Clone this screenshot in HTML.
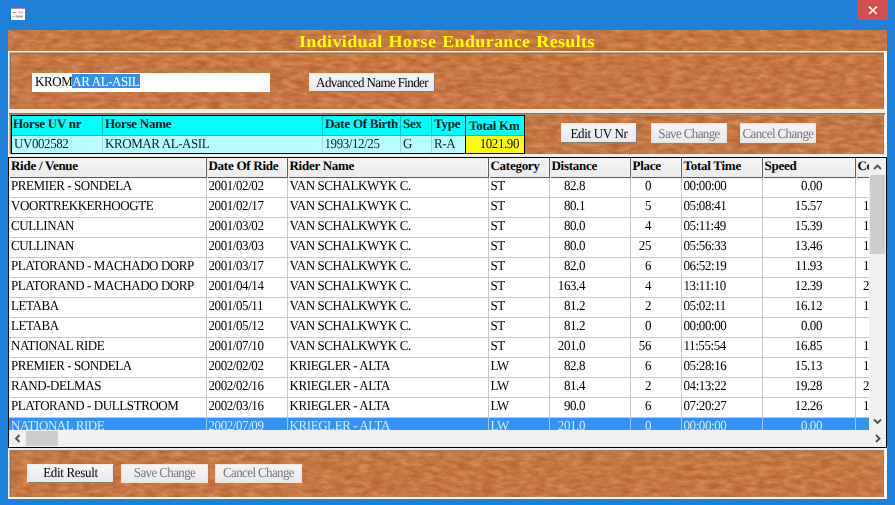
<!DOCTYPE html>
<html><head><meta charset="utf-8">
<style>
html,body{margin:0;padding:0;}
body{width:895px;height:505px;overflow:hidden;position:relative;background:#1d7fd8;font-family:"Liberation Serif", serif;font-size:13px;}
body>div{position:absolute;}
.t{white-space:pre;letter-spacing:-0.42px;transform:scaleY(1.06);transform-origin:0 12px;text-rendering:geometricPrecision;}
</style></head><body>
<svg style="position:absolute;left:10px;top:7px" width="16" height="14" viewBox="0 0 16 14">
<rect x="1" y="1" width="14" height="12" fill="#ffffff"/>
<rect x="1" y="1" width="14" height="1" fill="#c078c8"/>
<rect x="2.5" y="5" width="4" height="1" fill="#a0a0a0"/>
<rect x="8" y="4.5" width="5" height="2" fill="#c8c8c8"/>
<rect x="2.5" y="9" width="2" height="1" fill="#c0b8b8"/>
<rect x="5.5" y="8.5" width="7.5" height="2" fill="#b8a8a8"/>
</svg>
<div style="left:857px;top:0px;width:31px;height:20px;background:#d24f4f;"></div>
<svg style="position:absolute;left:857px;top:0px" width="30" height="19" viewBox="0 0 30 19">
<path d="M12 6.6 L19.8 14 M19.8 6.6 L12 14" stroke="#ffffff" stroke-width="1.6" fill="none"/>
</svg>
<svg style="position:absolute;left:8px;top:30px" width="879" height="469">
<defs>
<filter id="wood" x="0" y="0" width="100%" height="100%" color-interpolation-filters="sRGB">
<feTurbulence type="fractalNoise" baseFrequency="0.08 0.22" numOctaves="3" seed="3" result="n"/>
<feColorMatrix type="matrix" in="n" values="0.22 0 0 0 0.666  0.24 0 0 0 0.35  0.22 0 0 0 0.156  0 0 0 0 1"/>
</filter>
</defs>
<rect x="0" y="0" width="879" height="469" fill="#c97a45" filter="url(#wood)"/>
</svg>
<div class="t" style="left:299px;top:31.2px;line-height:21px;font-weight:bold;font-size:18px;color:#ffff00;letter-spacing:0.36px;word-spacing:1px;transform:scaleY(0.94);transform-origin:0 16px;">Individual Horse Endurance Results</div>
<div style="left:8px;top:51px;width:879px;height:1px;background:#f4efe6;"></div>
<div style="left:9px;top:52px;width:876px;height:1px;background:#c8b8a8;"></div>
<div style="left:10px;top:53px;width:875px;height:1px;background:#857565;"></div>
<div style="left:8px;top:51px;width:1px;height:448px;background:#f4efe6;"></div>
<div style="left:9px;top:52px;width:1px;height:446px;background:#c8b8a8;"></div>
<div style="left:10px;top:53px;width:1px;height:444px;background:#857565;"></div>
<div style="left:884px;top:51px;width:3px;height:448px;background:#f8f4ee;"></div>
<div style="left:8px;top:497px;width:879px;height:2px;background:#f8f4ee;"></div>
<div style="left:32px;top:73px;width:238px;height:19px;background:#ffffff;"></div>
<div style="left:72px;top:74px;width:68px;height:14px;background:#3390ee;"></div>
<div class="t" style="left:35px;top:74px;line-height:15px;color:#000;">KROM<span style="color:#ffffff">AR AL-ASIL</span></div>
<div style="left:309px;top:73px;width:126px;height:19px;background:linear-gradient(#f3f4f6,#e7e9ec);border:1px solid;border-color:#f2e8de #8a7868 #8a7868 #f2e8de;box-sizing:border-box;"></div>
<div class="t" style="left:309px;top:74.9px;line-height:15px;color:#000000;letter-spacing:-0.62px;width:126px;text-align:center;">Advanced Name Finder</div>
<div style="left:9px;top:109px;width:876px;height:4px;background:#f2ede6;"></div>
<div style="left:9px;top:113px;width:876px;height:1px;background:#857565;"></div>
<div style="left:9px;top:114px;width:876px;height:1px;background:#a88a74;"></div>
<div style="left:11px;top:115px;width:514px;height:39px;background:#000000;"></div>
<div style="left:12px;top:116px;width:512px;height:19px;background:#00ffff;"></div>
<div style="left:12px;top:135px;width:512px;height:1px;background:#00c8c8;"></div>
<div style="left:12px;top:136px;width:453px;height:17px;background:#b6ffff;"></div>
<div style="left:466px;top:136px;width:58px;height:17px;background:#ffff00;"></div>
<div style="left:465px;top:116px;width:1px;height:37px;background:#000000;"></div>
<div style="left:102px;top:116px;width:1px;height:19px;background:#00c0c0;"></div>
<div style="left:102px;top:136px;width:1px;height:17px;background:#90dede;"></div>
<div style="left:322px;top:116px;width:1px;height:19px;background:#00c0c0;"></div>
<div style="left:322px;top:136px;width:1px;height:17px;background:#90dede;"></div>
<div style="left:400px;top:116px;width:1px;height:19px;background:#00c0c0;"></div>
<div style="left:400px;top:136px;width:1px;height:17px;background:#90dede;"></div>
<div style="left:431px;top:116px;width:1px;height:19px;background:#00c0c0;"></div>
<div style="left:431px;top:136px;width:1px;height:17px;background:#90dede;"></div>
<div class="t" style="left:13px;top:116px;line-height:15px;font-weight:bold;color:#002020;transform:none;letter-spacing:-0.27px;">Horse UV nr</div>
<div class="t" style="left:105px;top:116px;line-height:15px;font-weight:bold;color:#002020;transform:none;letter-spacing:-0.27px;">Horse Name</div>
<div class="t" style="left:325px;top:116px;line-height:15px;font-weight:bold;color:#002020;transform:none;letter-spacing:-0.27px;">Date Of Birth</div>
<div class="t" style="left:403px;top:116px;line-height:15px;font-weight:bold;color:#002020;transform:none;letter-spacing:-0.27px;">Sex</div>
<div class="t" style="left:434px;top:116px;line-height:15px;font-weight:bold;color:#002020;transform:none;letter-spacing:-0.27px;">Type</div>
<div class="t" style="left:469px;top:118px;line-height:15px;font-weight:bold;color:#002020;transform:none;letter-spacing:-0.27px;">Total Km</div>
<div class="t" style="left:14px;top:136px;line-height:15px;color:#102020;">UV002582</div>
<div class="t" style="left:105px;top:136px;line-height:15px;color:#102020;">KROMAR AL-ASIL</div>
<div class="t" style="left:324.5px;top:136px;line-height:15px;color:#102020;">1993/12/25</div>
<div class="t" style="left:403px;top:136px;line-height:15px;color:#102020;">G</div>
<div class="t" style="left:434px;top:136px;line-height:15px;color:#102020;">R-A</div>
<div class="t" style="left:466px;top:136px;line-height:15px;color:#101000;width:53px;text-align:right;">1021.90</div>
<div style="left:561px;top:123px;width:76px;height:20px;background:linear-gradient(#f3f4f6,#e7e9ec);border:1px solid;border-color:#f2e8de #8a7868 #8a7868 #f2e8de;box-sizing:border-box;"></div>
<div class="t" style="left:561px;top:125.7px;line-height:15px;color:#000000;letter-spacing:-0.33px;width:76px;text-align:center;">Edit UV Nr</div>
<div style="left:651px;top:123px;width:76px;height:20px;background:linear-gradient(#f3f4f6,#e7e9ec);border:1px solid;border-color:#efe3d6;box-sizing:border-box;"></div>
<div class="t" style="left:651px;top:125.7px;line-height:15px;color:#767676;letter-spacing:-0.62px;width:76px;text-align:center;">Save Change</div>
<div style="left:740px;top:123px;width:76px;height:20px;background:linear-gradient(#f3f4f6,#e7e9ec);border:1px solid;border-color:#efe3d6;box-sizing:border-box;"></div>
<div class="t" style="left:740px;top:125.7px;line-height:15px;color:#767676;letter-spacing:-0.62px;width:76px;text-align:center;">Cancel Change</div>
<div style="left:9px;top:154px;width:876px;height:3px;background:#f2f0ee;"></div>
<div style="left:8px;top:157px;width:879px;height:291px;background:#000000;"></div>
<div style="left:9px;top:158px;width:877px;height:289px;background:#ffffff;"></div>
<div style="left:9px;top:158px;width:860px;height:19px;background:linear-gradient(#f4f4f4,#ececec);"></div>
<div style="left:10px;top:177px;width:197px;height:1px;background:#5a5a5a;"></div>
<div style="left:206px;top:158px;width:1px;height:20px;background:#5e5e5e;"></div>
<div style="left:205px;top:158px;width:1px;height:19px;background:#fafafa;"></div>
<div style="left:208px;top:177px;width:80px;height:1px;background:#5a5a5a;"></div>
<div style="left:287px;top:158px;width:1px;height:20px;background:#5e5e5e;"></div>
<div style="left:286px;top:158px;width:1px;height:19px;background:#fafafa;"></div>
<div style="left:289px;top:177px;width:200px;height:1px;background:#5a5a5a;"></div>
<div style="left:488px;top:158px;width:1px;height:20px;background:#5e5e5e;"></div>
<div style="left:487px;top:158px;width:1px;height:19px;background:#fafafa;"></div>
<div style="left:490px;top:177px;width:60px;height:1px;background:#5a5a5a;"></div>
<div style="left:549px;top:158px;width:1px;height:20px;background:#5e5e5e;"></div>
<div style="left:548px;top:158px;width:1px;height:19px;background:#fafafa;"></div>
<div style="left:551px;top:177px;width:80px;height:1px;background:#5a5a5a;"></div>
<div style="left:630px;top:158px;width:1px;height:20px;background:#5e5e5e;"></div>
<div style="left:629px;top:158px;width:1px;height:19px;background:#fafafa;"></div>
<div style="left:632px;top:177px;width:50px;height:1px;background:#5a5a5a;"></div>
<div style="left:681px;top:158px;width:1px;height:20px;background:#5e5e5e;"></div>
<div style="left:680px;top:158px;width:1px;height:19px;background:#fafafa;"></div>
<div style="left:683px;top:177px;width:80px;height:1px;background:#5a5a5a;"></div>
<div style="left:762px;top:158px;width:1px;height:20px;background:#5e5e5e;"></div>
<div style="left:761px;top:158px;width:1px;height:19px;background:#fafafa;"></div>
<div style="left:764px;top:177px;width:92px;height:1px;background:#5a5a5a;"></div>
<div style="left:855px;top:158px;width:1px;height:20px;background:#5e5e5e;"></div>
<div style="left:854px;top:158px;width:1px;height:19px;background:#fafafa;"></div>
<div style="left:857px;top:177px;width:12px;height:1px;background:#5a5a5a;"></div>
<div class="t" style="left:11px;top:158px;line-height:15px;font-weight:bold;color:#000;transform:none;letter-spacing:-0.27px;">Ride / Venue</div>
<div class="t" style="left:208.5px;top:158px;line-height:15px;font-weight:bold;color:#000;transform:none;letter-spacing:-0.27px;">Date Of Ride</div>
<div class="t" style="left:289.5px;top:158px;line-height:15px;font-weight:bold;color:#000;transform:none;letter-spacing:-0.27px;">Rider Name</div>
<div class="t" style="left:490.5px;top:158px;line-height:15px;font-weight:bold;color:#000;transform:none;letter-spacing:-0.27px;">Category</div>
<div class="t" style="left:551.5px;top:158px;line-height:15px;font-weight:bold;color:#000;transform:none;letter-spacing:-0.27px;">Distance</div>
<div class="t" style="left:632.5px;top:158px;line-height:15px;font-weight:bold;color:#000;transform:none;letter-spacing:-0.27px;">Place</div>
<div class="t" style="left:683.5px;top:158px;line-height:15px;font-weight:bold;color:#000;transform:none;letter-spacing:-0.27px;">Total Time</div>
<div class="t" style="left:764.5px;top:158px;line-height:15px;font-weight:bold;color:#000;transform:none;letter-spacing:-0.27px;">Speed</div>
<div class="t" style="left:857.5px;top:158px;line-height:15px;font-weight:bold;color:#000;transform:none;letter-spacing:-0.27px;">Cc</div>
<div style="left:9px;top:197px;width:860px;height:1px;background:#c8c8c8;"></div>
<div style="left:206px;top:178px;width:1px;height:19px;background:#c8c8c8;"></div>
<div style="left:287px;top:178px;width:1px;height:19px;background:#c8c8c8;"></div>
<div style="left:488px;top:178px;width:1px;height:19px;background:#c8c8c8;"></div>
<div style="left:549px;top:178px;width:1px;height:19px;background:#c8c8c8;"></div>
<div style="left:630px;top:178px;width:1px;height:19px;background:#c8c8c8;"></div>
<div style="left:681px;top:178px;width:1px;height:19px;background:#c8c8c8;"></div>
<div style="left:762px;top:178px;width:1px;height:19px;background:#c8c8c8;"></div>
<div style="left:855px;top:178px;width:1px;height:19px;background:#c8c8c8;"></div>
<div class="t" style="left:11px;top:178px;line-height:15px;color:#000000;">PREMIER - SONDELA</div>
<div class="t" style="left:208.5px;top:178px;line-height:15px;color:#000000;">2001/02/02</div>
<div class="t" style="left:289.5px;top:178px;line-height:15px;color:#000000;">VAN SCHALKWYK C.</div>
<div class="t" style="left:490.5px;top:178px;line-height:15px;color:#000000;">ST</div>
<div class="t" style="left:549px;top:178px;line-height:15px;color:#000000;width:36px;text-align:right;">82.8</div>
<div class="t" style="left:630px;top:178px;line-height:15px;color:#000000;width:21px;text-align:right;">0</div>
<div class="t" style="left:683.5px;top:178px;line-height:15px;color:#000000;">00:00:00</div>
<div class="t" style="left:762px;top:178px;line-height:15px;color:#000000;width:60px;text-align:right;">0.00</div>
<div class="t" style="left:855px;top:178px;line-height:15px;color:#000000;width:14px;text-align:right;"></div>
<div style="left:9px;top:217px;width:860px;height:1px;background:#c8c8c8;"></div>
<div style="left:206px;top:198px;width:1px;height:19px;background:#c8c8c8;"></div>
<div style="left:287px;top:198px;width:1px;height:19px;background:#c8c8c8;"></div>
<div style="left:488px;top:198px;width:1px;height:19px;background:#c8c8c8;"></div>
<div style="left:549px;top:198px;width:1px;height:19px;background:#c8c8c8;"></div>
<div style="left:630px;top:198px;width:1px;height:19px;background:#c8c8c8;"></div>
<div style="left:681px;top:198px;width:1px;height:19px;background:#c8c8c8;"></div>
<div style="left:762px;top:198px;width:1px;height:19px;background:#c8c8c8;"></div>
<div style="left:855px;top:198px;width:1px;height:19px;background:#c8c8c8;"></div>
<div class="t" style="left:11px;top:198px;line-height:15px;color:#000000;">VOORTREKKERHOOGTE</div>
<div class="t" style="left:208.5px;top:198px;line-height:15px;color:#000000;">2001/02/17</div>
<div class="t" style="left:289.5px;top:198px;line-height:15px;color:#000000;">VAN SCHALKWYK C.</div>
<div class="t" style="left:490.5px;top:198px;line-height:15px;color:#000000;">ST</div>
<div class="t" style="left:549px;top:198px;line-height:15px;color:#000000;width:36px;text-align:right;">80.1</div>
<div class="t" style="left:630px;top:198px;line-height:15px;color:#000000;width:21px;text-align:right;">5</div>
<div class="t" style="left:683.5px;top:198px;line-height:15px;color:#000000;">05:08:41</div>
<div class="t" style="left:762px;top:198px;line-height:15px;color:#000000;width:60px;text-align:right;">15.57</div>
<div class="t" style="left:855px;top:198px;line-height:15px;color:#000000;width:14px;text-align:right;">1</div>
<div style="left:9px;top:237px;width:860px;height:1px;background:#c8c8c8;"></div>
<div style="left:206px;top:218px;width:1px;height:19px;background:#c8c8c8;"></div>
<div style="left:287px;top:218px;width:1px;height:19px;background:#c8c8c8;"></div>
<div style="left:488px;top:218px;width:1px;height:19px;background:#c8c8c8;"></div>
<div style="left:549px;top:218px;width:1px;height:19px;background:#c8c8c8;"></div>
<div style="left:630px;top:218px;width:1px;height:19px;background:#c8c8c8;"></div>
<div style="left:681px;top:218px;width:1px;height:19px;background:#c8c8c8;"></div>
<div style="left:762px;top:218px;width:1px;height:19px;background:#c8c8c8;"></div>
<div style="left:855px;top:218px;width:1px;height:19px;background:#c8c8c8;"></div>
<div class="t" style="left:11px;top:218px;line-height:15px;color:#000000;">CULLINAN</div>
<div class="t" style="left:208.5px;top:218px;line-height:15px;color:#000000;">2001/03/02</div>
<div class="t" style="left:289.5px;top:218px;line-height:15px;color:#000000;">VAN SCHALKWYK C.</div>
<div class="t" style="left:490.5px;top:218px;line-height:15px;color:#000000;">ST</div>
<div class="t" style="left:549px;top:218px;line-height:15px;color:#000000;width:36px;text-align:right;">80.0</div>
<div class="t" style="left:630px;top:218px;line-height:15px;color:#000000;width:21px;text-align:right;">4</div>
<div class="t" style="left:683.5px;top:218px;line-height:15px;color:#000000;">05:11:49</div>
<div class="t" style="left:762px;top:218px;line-height:15px;color:#000000;width:60px;text-align:right;">15.39</div>
<div class="t" style="left:855px;top:218px;line-height:15px;color:#000000;width:14px;text-align:right;">1</div>
<div style="left:9px;top:257px;width:860px;height:1px;background:#c8c8c8;"></div>
<div style="left:206px;top:238px;width:1px;height:19px;background:#c8c8c8;"></div>
<div style="left:287px;top:238px;width:1px;height:19px;background:#c8c8c8;"></div>
<div style="left:488px;top:238px;width:1px;height:19px;background:#c8c8c8;"></div>
<div style="left:549px;top:238px;width:1px;height:19px;background:#c8c8c8;"></div>
<div style="left:630px;top:238px;width:1px;height:19px;background:#c8c8c8;"></div>
<div style="left:681px;top:238px;width:1px;height:19px;background:#c8c8c8;"></div>
<div style="left:762px;top:238px;width:1px;height:19px;background:#c8c8c8;"></div>
<div style="left:855px;top:238px;width:1px;height:19px;background:#c8c8c8;"></div>
<div class="t" style="left:11px;top:238px;line-height:15px;color:#000000;">CULLINAN</div>
<div class="t" style="left:208.5px;top:238px;line-height:15px;color:#000000;">2001/03/03</div>
<div class="t" style="left:289.5px;top:238px;line-height:15px;color:#000000;">VAN SCHALKWYK C.</div>
<div class="t" style="left:490.5px;top:238px;line-height:15px;color:#000000;">ST</div>
<div class="t" style="left:549px;top:238px;line-height:15px;color:#000000;width:36px;text-align:right;">80.0</div>
<div class="t" style="left:630px;top:238px;line-height:15px;color:#000000;width:21px;text-align:right;">25</div>
<div class="t" style="left:683.5px;top:238px;line-height:15px;color:#000000;">05:56:33</div>
<div class="t" style="left:762px;top:238px;line-height:15px;color:#000000;width:60px;text-align:right;">13.46</div>
<div class="t" style="left:855px;top:238px;line-height:15px;color:#000000;width:14px;text-align:right;">1</div>
<div style="left:9px;top:277px;width:860px;height:1px;background:#c8c8c8;"></div>
<div style="left:206px;top:258px;width:1px;height:19px;background:#c8c8c8;"></div>
<div style="left:287px;top:258px;width:1px;height:19px;background:#c8c8c8;"></div>
<div style="left:488px;top:258px;width:1px;height:19px;background:#c8c8c8;"></div>
<div style="left:549px;top:258px;width:1px;height:19px;background:#c8c8c8;"></div>
<div style="left:630px;top:258px;width:1px;height:19px;background:#c8c8c8;"></div>
<div style="left:681px;top:258px;width:1px;height:19px;background:#c8c8c8;"></div>
<div style="left:762px;top:258px;width:1px;height:19px;background:#c8c8c8;"></div>
<div style="left:855px;top:258px;width:1px;height:19px;background:#c8c8c8;"></div>
<div class="t" style="left:11px;top:258px;line-height:15px;color:#000000;">PLATORAND - MACHADO DORP</div>
<div class="t" style="left:208.5px;top:258px;line-height:15px;color:#000000;">2001/03/17</div>
<div class="t" style="left:289.5px;top:258px;line-height:15px;color:#000000;">VAN SCHALKWYK C.</div>
<div class="t" style="left:490.5px;top:258px;line-height:15px;color:#000000;">ST</div>
<div class="t" style="left:549px;top:258px;line-height:15px;color:#000000;width:36px;text-align:right;">82.0</div>
<div class="t" style="left:630px;top:258px;line-height:15px;color:#000000;width:21px;text-align:right;">6</div>
<div class="t" style="left:683.5px;top:258px;line-height:15px;color:#000000;">06:52:19</div>
<div class="t" style="left:762px;top:258px;line-height:15px;color:#000000;width:60px;text-align:right;">11.93</div>
<div class="t" style="left:855px;top:258px;line-height:15px;color:#000000;width:14px;text-align:right;">1</div>
<div style="left:9px;top:297px;width:860px;height:1px;background:#c8c8c8;"></div>
<div style="left:206px;top:278px;width:1px;height:19px;background:#c8c8c8;"></div>
<div style="left:287px;top:278px;width:1px;height:19px;background:#c8c8c8;"></div>
<div style="left:488px;top:278px;width:1px;height:19px;background:#c8c8c8;"></div>
<div style="left:549px;top:278px;width:1px;height:19px;background:#c8c8c8;"></div>
<div style="left:630px;top:278px;width:1px;height:19px;background:#c8c8c8;"></div>
<div style="left:681px;top:278px;width:1px;height:19px;background:#c8c8c8;"></div>
<div style="left:762px;top:278px;width:1px;height:19px;background:#c8c8c8;"></div>
<div style="left:855px;top:278px;width:1px;height:19px;background:#c8c8c8;"></div>
<div class="t" style="left:11px;top:278px;line-height:15px;color:#000000;">PLATORAND - MACHADO DORP</div>
<div class="t" style="left:208.5px;top:278px;line-height:15px;color:#000000;">2001/04/14</div>
<div class="t" style="left:289.5px;top:278px;line-height:15px;color:#000000;">VAN SCHALKWYK C.</div>
<div class="t" style="left:490.5px;top:278px;line-height:15px;color:#000000;">ST</div>
<div class="t" style="left:549px;top:278px;line-height:15px;color:#000000;width:36px;text-align:right;">163.4</div>
<div class="t" style="left:630px;top:278px;line-height:15px;color:#000000;width:21px;text-align:right;">4</div>
<div class="t" style="left:683.5px;top:278px;line-height:15px;color:#000000;">13:11:10</div>
<div class="t" style="left:762px;top:278px;line-height:15px;color:#000000;width:60px;text-align:right;">12.39</div>
<div class="t" style="left:855px;top:278px;line-height:15px;color:#000000;width:14px;text-align:right;">2</div>
<div style="left:9px;top:317px;width:860px;height:1px;background:#c8c8c8;"></div>
<div style="left:206px;top:298px;width:1px;height:19px;background:#c8c8c8;"></div>
<div style="left:287px;top:298px;width:1px;height:19px;background:#c8c8c8;"></div>
<div style="left:488px;top:298px;width:1px;height:19px;background:#c8c8c8;"></div>
<div style="left:549px;top:298px;width:1px;height:19px;background:#c8c8c8;"></div>
<div style="left:630px;top:298px;width:1px;height:19px;background:#c8c8c8;"></div>
<div style="left:681px;top:298px;width:1px;height:19px;background:#c8c8c8;"></div>
<div style="left:762px;top:298px;width:1px;height:19px;background:#c8c8c8;"></div>
<div style="left:855px;top:298px;width:1px;height:19px;background:#c8c8c8;"></div>
<div class="t" style="left:11px;top:298px;line-height:15px;color:#000000;">LETABA</div>
<div class="t" style="left:208.5px;top:298px;line-height:15px;color:#000000;">2001/05/11</div>
<div class="t" style="left:289.5px;top:298px;line-height:15px;color:#000000;">VAN SCHALKWYK C.</div>
<div class="t" style="left:490.5px;top:298px;line-height:15px;color:#000000;">ST</div>
<div class="t" style="left:549px;top:298px;line-height:15px;color:#000000;width:36px;text-align:right;">81.2</div>
<div class="t" style="left:630px;top:298px;line-height:15px;color:#000000;width:21px;text-align:right;">2</div>
<div class="t" style="left:683.5px;top:298px;line-height:15px;color:#000000;">05:02:11</div>
<div class="t" style="left:762px;top:298px;line-height:15px;color:#000000;width:60px;text-align:right;">16.12</div>
<div class="t" style="left:855px;top:298px;line-height:15px;color:#000000;width:14px;text-align:right;">1</div>
<div style="left:9px;top:337px;width:860px;height:1px;background:#c8c8c8;"></div>
<div style="left:206px;top:318px;width:1px;height:19px;background:#c8c8c8;"></div>
<div style="left:287px;top:318px;width:1px;height:19px;background:#c8c8c8;"></div>
<div style="left:488px;top:318px;width:1px;height:19px;background:#c8c8c8;"></div>
<div style="left:549px;top:318px;width:1px;height:19px;background:#c8c8c8;"></div>
<div style="left:630px;top:318px;width:1px;height:19px;background:#c8c8c8;"></div>
<div style="left:681px;top:318px;width:1px;height:19px;background:#c8c8c8;"></div>
<div style="left:762px;top:318px;width:1px;height:19px;background:#c8c8c8;"></div>
<div style="left:855px;top:318px;width:1px;height:19px;background:#c8c8c8;"></div>
<div class="t" style="left:11px;top:318px;line-height:15px;color:#000000;">LETABA</div>
<div class="t" style="left:208.5px;top:318px;line-height:15px;color:#000000;">2001/05/12</div>
<div class="t" style="left:289.5px;top:318px;line-height:15px;color:#000000;">VAN SCHALKWYK C.</div>
<div class="t" style="left:490.5px;top:318px;line-height:15px;color:#000000;">ST</div>
<div class="t" style="left:549px;top:318px;line-height:15px;color:#000000;width:36px;text-align:right;">81.2</div>
<div class="t" style="left:630px;top:318px;line-height:15px;color:#000000;width:21px;text-align:right;">0</div>
<div class="t" style="left:683.5px;top:318px;line-height:15px;color:#000000;">00:00:00</div>
<div class="t" style="left:762px;top:318px;line-height:15px;color:#000000;width:60px;text-align:right;">0.00</div>
<div class="t" style="left:855px;top:318px;line-height:15px;color:#000000;width:14px;text-align:right;"></div>
<div style="left:9px;top:357px;width:860px;height:1px;background:#c8c8c8;"></div>
<div style="left:206px;top:338px;width:1px;height:19px;background:#c8c8c8;"></div>
<div style="left:287px;top:338px;width:1px;height:19px;background:#c8c8c8;"></div>
<div style="left:488px;top:338px;width:1px;height:19px;background:#c8c8c8;"></div>
<div style="left:549px;top:338px;width:1px;height:19px;background:#c8c8c8;"></div>
<div style="left:630px;top:338px;width:1px;height:19px;background:#c8c8c8;"></div>
<div style="left:681px;top:338px;width:1px;height:19px;background:#c8c8c8;"></div>
<div style="left:762px;top:338px;width:1px;height:19px;background:#c8c8c8;"></div>
<div style="left:855px;top:338px;width:1px;height:19px;background:#c8c8c8;"></div>
<div class="t" style="left:11px;top:338px;line-height:15px;color:#000000;">NATIONAL RIDE</div>
<div class="t" style="left:208.5px;top:338px;line-height:15px;color:#000000;">2001/07/10</div>
<div class="t" style="left:289.5px;top:338px;line-height:15px;color:#000000;">VAN SCHALKWYK C.</div>
<div class="t" style="left:490.5px;top:338px;line-height:15px;color:#000000;">ST</div>
<div class="t" style="left:549px;top:338px;line-height:15px;color:#000000;width:36px;text-align:right;">201.0</div>
<div class="t" style="left:630px;top:338px;line-height:15px;color:#000000;width:21px;text-align:right;">56</div>
<div class="t" style="left:683.5px;top:338px;line-height:15px;color:#000000;">11:55:54</div>
<div class="t" style="left:762px;top:338px;line-height:15px;color:#000000;width:60px;text-align:right;">16.85</div>
<div class="t" style="left:855px;top:338px;line-height:15px;color:#000000;width:14px;text-align:right;">1</div>
<div style="left:9px;top:377px;width:860px;height:1px;background:#c8c8c8;"></div>
<div style="left:206px;top:358px;width:1px;height:19px;background:#c8c8c8;"></div>
<div style="left:287px;top:358px;width:1px;height:19px;background:#c8c8c8;"></div>
<div style="left:488px;top:358px;width:1px;height:19px;background:#c8c8c8;"></div>
<div style="left:549px;top:358px;width:1px;height:19px;background:#c8c8c8;"></div>
<div style="left:630px;top:358px;width:1px;height:19px;background:#c8c8c8;"></div>
<div style="left:681px;top:358px;width:1px;height:19px;background:#c8c8c8;"></div>
<div style="left:762px;top:358px;width:1px;height:19px;background:#c8c8c8;"></div>
<div style="left:855px;top:358px;width:1px;height:19px;background:#c8c8c8;"></div>
<div class="t" style="left:11px;top:358px;line-height:15px;color:#000000;">PREMIER - SONDELA</div>
<div class="t" style="left:208.5px;top:358px;line-height:15px;color:#000000;">2002/02/02</div>
<div class="t" style="left:289.5px;top:358px;line-height:15px;color:#000000;">KRIEGLER - ALTA</div>
<div class="t" style="left:490.5px;top:358px;line-height:15px;color:#000000;">LW</div>
<div class="t" style="left:549px;top:358px;line-height:15px;color:#000000;width:36px;text-align:right;">82.8</div>
<div class="t" style="left:630px;top:358px;line-height:15px;color:#000000;width:21px;text-align:right;">6</div>
<div class="t" style="left:683.5px;top:358px;line-height:15px;color:#000000;">05:28:16</div>
<div class="t" style="left:762px;top:358px;line-height:15px;color:#000000;width:60px;text-align:right;">15.13</div>
<div class="t" style="left:855px;top:358px;line-height:15px;color:#000000;width:14px;text-align:right;">1</div>
<div style="left:9px;top:397px;width:860px;height:1px;background:#c8c8c8;"></div>
<div style="left:206px;top:378px;width:1px;height:19px;background:#c8c8c8;"></div>
<div style="left:287px;top:378px;width:1px;height:19px;background:#c8c8c8;"></div>
<div style="left:488px;top:378px;width:1px;height:19px;background:#c8c8c8;"></div>
<div style="left:549px;top:378px;width:1px;height:19px;background:#c8c8c8;"></div>
<div style="left:630px;top:378px;width:1px;height:19px;background:#c8c8c8;"></div>
<div style="left:681px;top:378px;width:1px;height:19px;background:#c8c8c8;"></div>
<div style="left:762px;top:378px;width:1px;height:19px;background:#c8c8c8;"></div>
<div style="left:855px;top:378px;width:1px;height:19px;background:#c8c8c8;"></div>
<div class="t" style="left:11px;top:378px;line-height:15px;color:#000000;">RAND-DELMAS</div>
<div class="t" style="left:208.5px;top:378px;line-height:15px;color:#000000;">2002/02/16</div>
<div class="t" style="left:289.5px;top:378px;line-height:15px;color:#000000;">KRIEGLER - ALTA</div>
<div class="t" style="left:490.5px;top:378px;line-height:15px;color:#000000;">LW</div>
<div class="t" style="left:549px;top:378px;line-height:15px;color:#000000;width:36px;text-align:right;">81.4</div>
<div class="t" style="left:630px;top:378px;line-height:15px;color:#000000;width:21px;text-align:right;">2</div>
<div class="t" style="left:683.5px;top:378px;line-height:15px;color:#000000;">04:13:22</div>
<div class="t" style="left:762px;top:378px;line-height:15px;color:#000000;width:60px;text-align:right;">19.28</div>
<div class="t" style="left:855px;top:378px;line-height:15px;color:#000000;width:14px;text-align:right;">2</div>
<div style="left:9px;top:417px;width:860px;height:1px;background:#c8c8c8;"></div>
<div style="left:206px;top:398px;width:1px;height:19px;background:#c8c8c8;"></div>
<div style="left:287px;top:398px;width:1px;height:19px;background:#c8c8c8;"></div>
<div style="left:488px;top:398px;width:1px;height:19px;background:#c8c8c8;"></div>
<div style="left:549px;top:398px;width:1px;height:19px;background:#c8c8c8;"></div>
<div style="left:630px;top:398px;width:1px;height:19px;background:#c8c8c8;"></div>
<div style="left:681px;top:398px;width:1px;height:19px;background:#c8c8c8;"></div>
<div style="left:762px;top:398px;width:1px;height:19px;background:#c8c8c8;"></div>
<div style="left:855px;top:398px;width:1px;height:19px;background:#c8c8c8;"></div>
<div class="t" style="left:11px;top:398px;line-height:15px;color:#000000;">PLATORAND - DULLSTROOM</div>
<div class="t" style="left:208.5px;top:398px;line-height:15px;color:#000000;">2002/03/16</div>
<div class="t" style="left:289.5px;top:398px;line-height:15px;color:#000000;">KRIEGLER - ALTA</div>
<div class="t" style="left:490.5px;top:398px;line-height:15px;color:#000000;">LW</div>
<div class="t" style="left:549px;top:398px;line-height:15px;color:#000000;width:36px;text-align:right;">90.0</div>
<div class="t" style="left:630px;top:398px;line-height:15px;color:#000000;width:21px;text-align:right;">6</div>
<div class="t" style="left:683.5px;top:398px;line-height:15px;color:#000000;">07:20:27</div>
<div class="t" style="left:762px;top:398px;line-height:15px;color:#000000;width:60px;text-align:right;">12.26</div>
<div class="t" style="left:855px;top:398px;line-height:15px;color:#000000;width:14px;text-align:right;">1</div>
<div style="left:9px;top:418px;width:860px;height:12px;background:#3392f5;"></div>
<div style="left:206px;top:418px;width:1px;height:12px;background:#9cc8f8;"></div>
<div style="left:287px;top:418px;width:1px;height:12px;background:#9cc8f8;"></div>
<div style="left:488px;top:418px;width:1px;height:12px;background:#9cc8f8;"></div>
<div style="left:549px;top:418px;width:1px;height:12px;background:#9cc8f8;"></div>
<div style="left:630px;top:418px;width:1px;height:12px;background:#9cc8f8;"></div>
<div style="left:681px;top:418px;width:1px;height:12px;background:#9cc8f8;"></div>
<div style="left:762px;top:418px;width:1px;height:12px;background:#9cc8f8;"></div>
<div style="left:855px;top:418px;width:1px;height:12px;background:#9cc8f8;"></div>
<div class="t" style="left:11px;top:418px;line-height:15px;color:#d4e8ff;">NATIONAL RIDE</div>
<div class="t" style="left:208.5px;top:418px;line-height:15px;color:#d4e8ff;">2002/07/09</div>
<div class="t" style="left:289.5px;top:418px;line-height:15px;color:#d4e8ff;">KRIEGLER - ALTA</div>
<div class="t" style="left:490.5px;top:418px;line-height:15px;color:#d4e8ff;">LW</div>
<div class="t" style="left:549px;top:418px;line-height:15px;color:#d4e8ff;width:36px;text-align:right;">201.0</div>
<div class="t" style="left:630px;top:418px;line-height:15px;color:#d4e8ff;width:21px;text-align:right;">0</div>
<div class="t" style="left:683.5px;top:418px;line-height:15px;color:#d4e8ff;">00:00:00</div>
<div class="t" style="left:762px;top:418px;line-height:15px;color:#d4e8ff;width:60px;text-align:right;">0.00</div>
<div class="t" style="left:855px;top:418px;line-height:15px;color:#d4e8ff;width:14px;text-align:right;"></div>
<div style="left:869px;top:158px;width:17px;height:272px;background:#f0f0f0;"></div>
<div style="left:870px;top:175px;width:15px;height:79px;background:#cdcdcd;"></div>
<svg style="position:absolute;left:869px;top:158px" width="17" height="17"><path d="M5 11 L8.5 7.5 L12 11" stroke="#505050" stroke-width="1.9" fill="none"/></svg>
<svg style="position:absolute;left:869px;top:413px" width="17" height="17"><path d="M5 6.5 L8.5 10 L12 6.5" stroke="#505050" stroke-width="1.9" fill="none"/></svg>
<div style="left:9px;top:430px;width:877px;height:17px;background:#f0f0f0;"></div>
<div style="left:26px;top:431px;width:32px;height:15px;background:#cdcdcd;"></div>
<svg style="position:absolute;left:9px;top:430px" width="17" height="17"><path d="M10.5 5 L7 8.5 L10.5 12" stroke="#505050" stroke-width="1.9" fill="none"/></svg>
<svg style="position:absolute;left:869px;top:430px" width="17" height="17"><path d="M7 5 L10.5 8.5 L7 12" stroke="#505050" stroke-width="1.9" fill="none"/></svg>
<div style="left:9px;top:448px;width:876px;height:2px;background:#eee8e0;"></div>
<div style="left:11px;top:450px;width:873px;height:1px;background:#9a8070;"></div>
<div style="left:27px;top:464px;width:87px;height:19px;background:linear-gradient(#f3f4f6,#e7e9ec);border:1px solid;border-color:#f2e8de #8a7868 #8a7868 #f2e8de;box-sizing:border-box;"></div>
<div class="t" style="left:27px;top:464.7px;line-height:15px;color:#000000;letter-spacing:-0.33px;width:87px;text-align:center;">Edit Result</div>
<div style="left:121px;top:464px;width:87px;height:19px;background:linear-gradient(#f3f4f6,#e7e9ec);border:1px solid;border-color:#efe3d6;box-sizing:border-box;"></div>
<div class="t" style="left:121px;top:464.7px;line-height:15px;color:#767676;letter-spacing:-0.62px;width:87px;text-align:center;">Save Change</div>
<div style="left:215px;top:464px;width:87px;height:19px;background:linear-gradient(#f3f4f6,#e7e9ec);border:1px solid;border-color:#efe3d6;box-sizing:border-box;"></div>
<div class="t" style="left:215px;top:464.7px;line-height:15px;color:#767676;letter-spacing:-0.62px;width:87px;text-align:center;">Cancel Change</div>
</body></html>
